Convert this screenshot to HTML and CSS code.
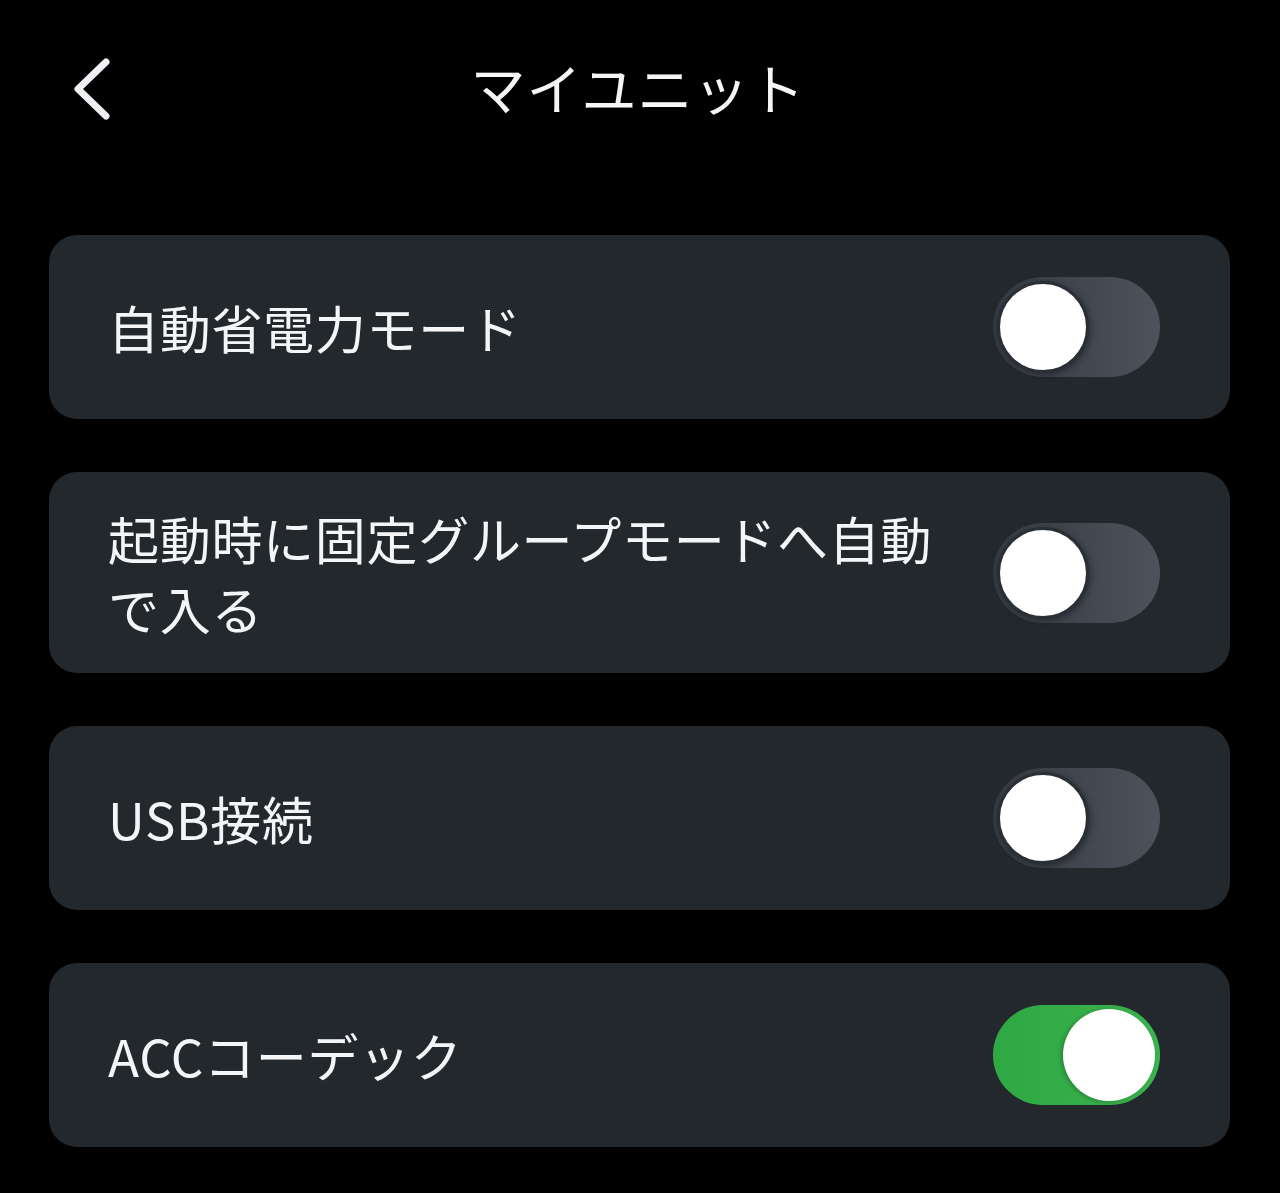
FILE: index.html
```html
<!DOCTYPE html>
<html lang="ja">
<head>
    <meta charset="UTF-8">
    <meta name="viewport" content="width=device-width, initial-scale=1.0">
    <title>マイユニット</title>
    <link rel="stylesheet" href="styles.css">
</head>
<body>
    <header class="top-bar">
        <button class="back-btn" aria-label="戻る">
            <svg width="44" height="66" viewBox="0 0 44 66">
                <path d="M36 6 L8 33 L36 60" fill="none" stroke="#eef0f3" stroke-width="7" stroke-linecap="round" stroke-linejoin="round"/>
            </svg>
        </button>
        <h1 class="title">マイユニット</h1>
    </header>

    <main class="settings-list">
        <div class="setting-card">
            <div class="setting-label">自動省電力モード</div>
            <div class="switch"><div class="knob"></div></div>
        </div>

        <div class="setting-card two-line">
            <div class="setting-label">起動時に固定グループモードへ自動で入る</div>
            <div class="switch"><div class="knob"></div></div>
        </div>

        <div class="setting-card">
            <div class="setting-label">USB接続</div>
            <div class="switch"><div class="knob"></div></div>
        </div>

        <div class="setting-card">
            <div class="setting-label">ACCコーデック</div>
            <div class="switch on"><div class="knob"></div></div>
        </div>
    </main>
</body>
</html>
```

FILE: styles.css
```css
* {
    margin: 0;
    padding: 0;
    box-sizing: border-box;
}

html, body {
    width: 100%;
    height: 100%;
    background-color: #000;
    font-family: 'Noto Sans CJK JP', 'Noto Sans', sans-serif;
    color: #f4f5f7;
    overflow: hidden;
}

/* ヘッダー */
.top-bar {
    height: 180px;
    display: flex;
    align-items: center;
    justify-content: center;
    position: relative;
}

.back-btn {
    position: absolute;
    left: 70px;
    top: 56px;
    background: none;
    border: none;
    display: flex;
}

.title {
    font-size: 55px;
    font-weight: 400;
    letter-spacing: 1px;
    margin-top: -8px;
    margin-left: -4px;
}

/* 設定リスト */
.settings-list {
    padding: 55px 50px 0 49px;
    display: flex;
    flex-direction: column;
    gap: 53px;
}

.setting-card {
    min-height: 184px;
    background-color: #23282d;
    border-radius: 28px;
    padding: 30px 70px 30px 59px;
    display: flex;
    align-items: center;
    gap: 60px;
}

.setting-card.two-line {
    padding-top: 30.5px;
    padding-bottom: 30.5px;
}

.setting-label {
    flex: 1;
    font-size: 51px;
    line-height: 70px;
    letter-spacing: 0.7px;
    font-weight: 400;
}

/* トグルスイッチ */
.switch {
    flex-shrink: 0;
    width: 167px;
    height: 100px;
    border-radius: 50px;
    background: linear-gradient(to right, #353a42, #4d525b);
    padding: 4px;
    display: flex;
    align-items: center;
}

.knob {
    width: 92px;
    height: 92px;
    border-radius: 50%;
    background-color: #fff;
    border: 3px solid #2a2e35;
    box-shadow: 2px 2px 6px rgba(0, 0, 0, 0.35);
}

.switch.on {
    background: linear-gradient(to right, #2fa843, #3bb54f);
    justify-content: flex-end;
    padding-right: 5px;
}

.switch.on .knob {
    border: none;
    box-shadow: -2px 1px 5px rgba(0, 0, 0, 0.25);
}
```
